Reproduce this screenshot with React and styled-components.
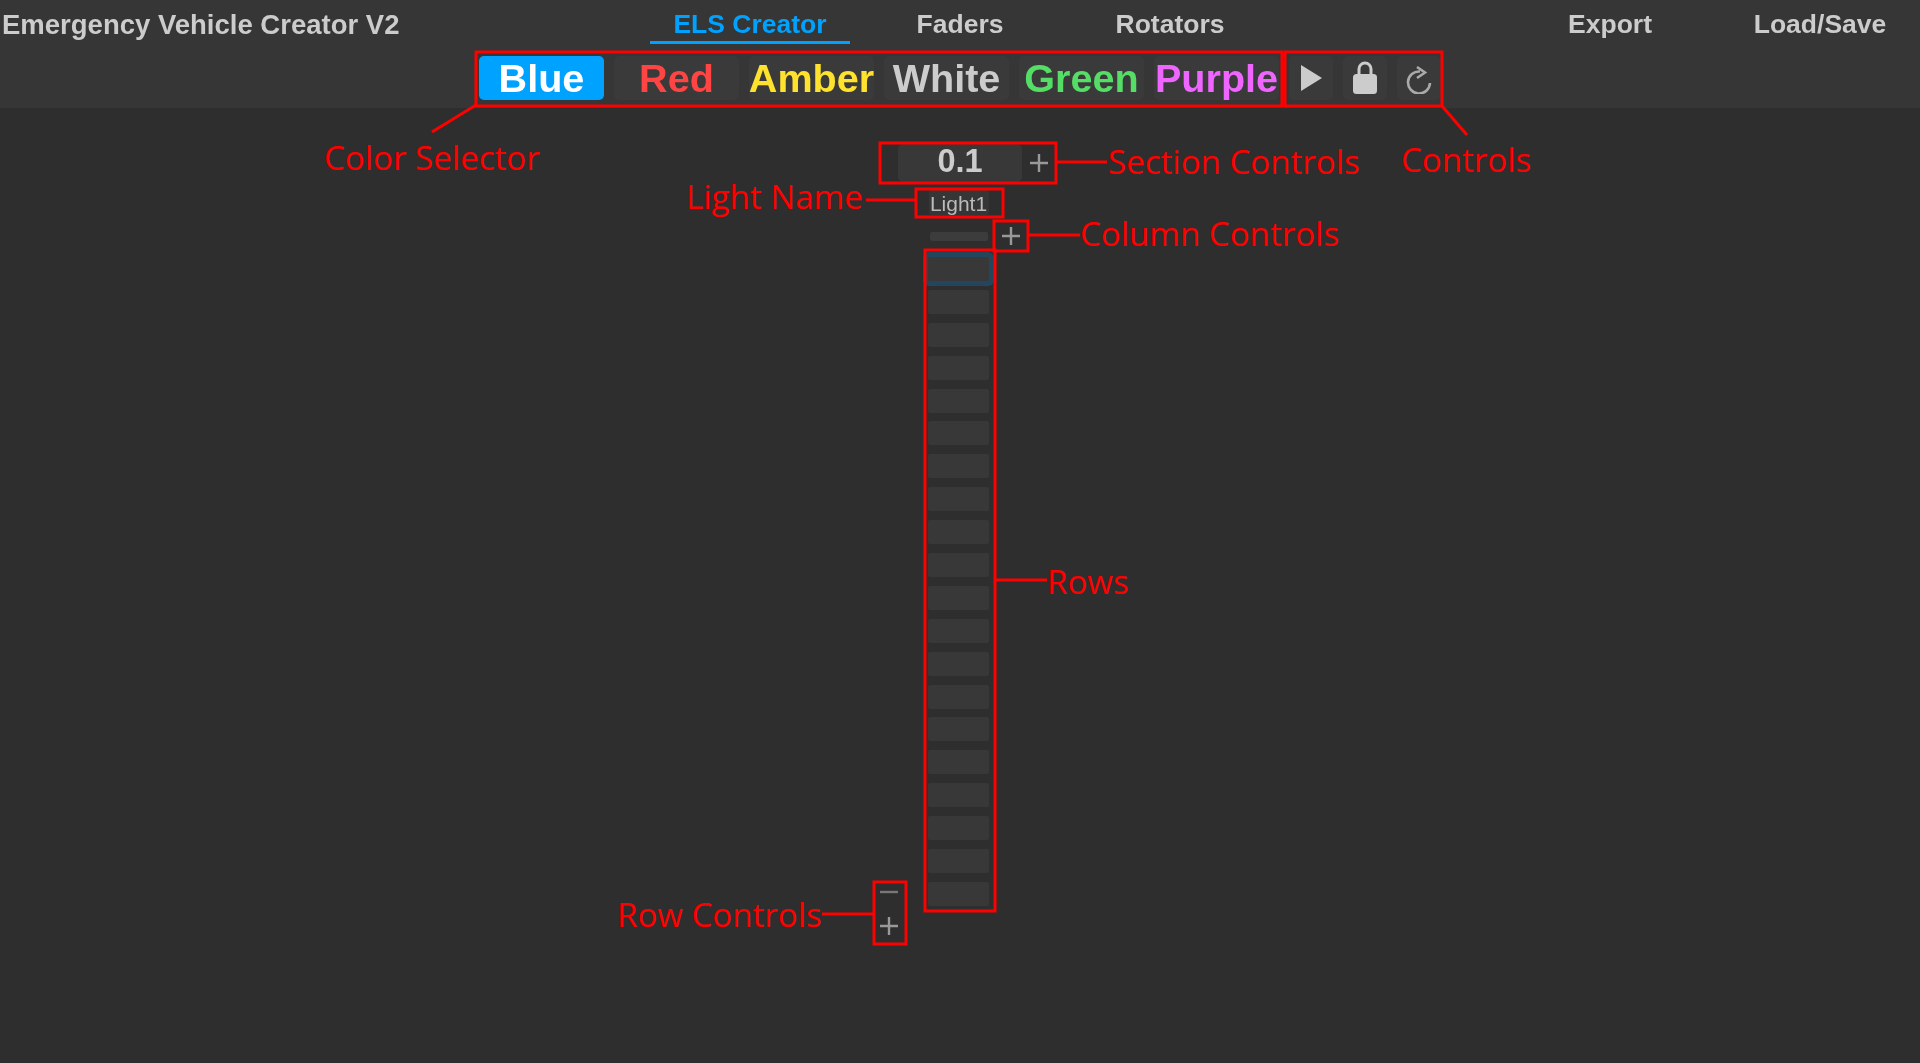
import React from "react";
import styled, { createGlobalStyle } from "styled-components";

const GlobalStyle = createGlobalStyle`
    html, body {
        margin: 0;
        height: 100%;
        background: #2e2e2e;
        overflow: hidden;
    }
    #root {
        height: 100%;
    }
`;

const COLORS = [
    { name: "Blue", color: "#ffffff", active: true },
    { name: "Red", color: "#ff4444" },
    { name: "Amber", color: "#ffe22e" },
    { name: "White", color: "#cccccc" },
    { name: "Green", color: "#55dd66" },
    { name: "Purple", color: "#ee66ff" }
];

const ROWS = Array.from({ length: 20 }, (_, i) => i);

const BOXES = [
    [476, 52, 806, 54],
    [1285, 52, 157, 54],
    [880, 143, 176, 40],
    [916, 189, 87, 28],
    [994, 221, 34, 30],
    [925, 250, 70, 661],
    [874, 882, 32, 62]
];

const LINES = [
    [476, 105, 432, 132],
    [1442, 106, 1467, 135],
    [1056, 162, 1107, 162],
    [866, 200, 916, 200],
    [1028, 235, 1080, 235],
    [995, 580, 1047, 580],
    [822, 914, 874, 914]
];

const LABELS = [
    { text: "Color Selector", x: 324, y: 135 },
    { text: "Section Controls", x: 1108, y: 139 },
    { text: "Controls", x: 1401, y: 137 },
    { text: "Light Name", x: 686, y: 174 },
    { text: "Column Controls", x: 1080, y: 211 },
    { text: "Rows", x: 1047, y: 559 },
    { text: "Row Controls", x: 617, y: 892 }
];

export default function App() {
    return (
        <Page>
            <GlobalStyle />
            <Header>
                <TopRow>
                    <Title>Emergency Vehicle Creator V2</Title>
                    <Tabs>
                        <Tab $active>ELS Creator</Tab>
                        <Tab>Faders</Tab>
                        <Tab>Rotators</Tab>
                    </Tabs>
                    <RightTabs>
                        <Tab>Export</Tab>
                        <Tab>Load/Save</Tab>
                    </RightTabs>
                </TopRow>
                <Toolbar>
                    {COLORS.map(c => (
                        <ColorButton key={c.name} $color={c.color} $active={c.active}>
                            {c.name}
                        </ColorButton>
                    ))}
                    <IconButton>
                        <svg width="26" height="30" viewBox="0 0 26 30">
                            <path d="M3 2 L24 15 L3 28 Z" fill="#cccccc" />
                        </svg>
                    </IconButton>
                    <IconButton>
                        <svg width="26" height="36" viewBox="0 0 26 36">
                            <path
                                d="M7 16 V9 a6 6 0 0 1 12 0 V16"
                                fill="none"
                                stroke="#cccccc"
                                strokeWidth="3"
                            />
                            <rect x="1" y="14" width="24" height="20" rx="3.5" fill="#cccccc" />
                        </svg>
                    </IconButton>
                    <IconButton>
                        <svg width="28" height="32" viewBox="0 0 28 32">
                            <path
                                d="M15 9.5 A11 11 0 1 0 25 21"
                                fill="none"
                                stroke="#aaaaaa"
                                strokeWidth="2.6"
                            />
                            <path
                                d="M12 5 L20 10.5 L12 16"
                                fill="none"
                                stroke="#aaaaaa"
                                strokeWidth="2.6"
                            />
                        </svg>
                    </IconButton>
                </Toolbar>
            </Header>
            <Main>
                <SectionRow>
                    <TimeBox>0.1</TimeBox>
                    <PlainButton $size={34}>
                        <Plus />
                    </PlainButton>
                </SectionRow>
                <Track>
                    <TrackCenter>
                        <LightName>Light1</LightName>
                    </TrackCenter>
                </Track>
                <ColumnRow>
                    <ColumnBar />
                    <ColumnButton>
                        <Plus />
                    </ColumnButton>
                </ColumnRow>
                <Track>
                    <RowControls>
                        <PlainButton $size={24}>
                            <Minus />
                        </PlainButton>
                        <PlainButton $size={24}>
                            <Plus />
                        </PlainButton>
                    </RowControls>
                    <Cells>
                        {ROWS.map(r => (
                            <Cell key={r} $selected={r === 0} />
                        ))}
                    </Cells>
                </Track>
            </Main>
            <Marks viewBox="0 0 1920 1063">
                {BOXES.map(([x, y, w, h]) => (
                    <rect key={`${x}-${y}`} x={x} y={y} width={w} height={h} />
                ))}
                {LINES.map(([x1, y1, x2, y2]) => (
                    <line key={`${x1}-${y1}`} x1={x1} y1={y1} x2={x2} y2={y2} />
                ))}
            </Marks>
            {LABELS.map(l => (
                <Label key={l.text} $x={l.x} $y={l.y}>
                    {l.text}
                </Label>
            ))}
        </Page>
    );
}

const Plus = () => (
    <svg width="18" height="18" viewBox="0 0 18 18">
        <path d="M9 0 V18 M0 9 H18" stroke="#999999" strokeWidth="2.4" />
    </svg>
);

const Minus = () => (
    <svg width="18" height="18" viewBox="0 0 18 18">
        <path d="M0 9 H18" stroke="#777777" strokeWidth="2.4" />
    </svg>
);

const Page = styled.div`
    position: relative;
    height: 1063px;
    background: #2e2e2e;
    font-family: "Liberation Sans", Arial, sans-serif;
    color: #cccccc;
    overflow: hidden;
`;

const Header = styled.header`
    height: 108px;
    background: #363636;
    filter: blur(0.5px);
`;

const TopRow = styled.div`
    display: grid;
    grid-template-columns: 1fr auto 1fr;
    height: 48px;
`;

const Title = styled.div`
    padding: 9px 0 0 2px;
    font-size: 27.5px;
    font-weight: 700;
    line-height: 32px;
    white-space: nowrap;
`;

const Tabs = styled.nav`
    display: flex;
    gap: 10px;
    padding-top: 8px;
`;

const RightTabs = styled(Tabs)`
    justify-content: flex-end;
`;

const Tab = styled.div`
    width: 200px;
    height: 33px;
    text-align: center;
    font-size: 26.5px;
    font-weight: 700;
    line-height: 32px;
    color: ${props => (props.$active ? "#00a2ff" : "#cccccc")};
    border-bottom: 3px solid ${props => (props.$active ? "#00a2ff" : "transparent")};
    box-sizing: content-box;
`;

const Toolbar = styled.div`
    display: flex;
    justify-content: center;
    gap: 10px;
    margin-top: 8px;
`;

const ColorButton = styled.button`
    width: 125px;
    height: 44px;
    padding: 0;
    border: 0;
    border-radius: 5px;
    background: ${props => (props.$active ? "#00a2ff" : "#3a3a3a")};
    color: ${props => props.$color};
    font-family: inherit;
    font-size: 39.6px;
    font-weight: 700;
    line-height: 45px;
    white-space: nowrap;
    display: flex;
    justify-content: center;
`;

const IconButton = styled.button`
    width: 44px;
    height: 44px;
    padding: 0;
    border: 0;
    border-radius: 5px;
    background: #3a3a3a;
    display: flex;
    align-items: center;
    justify-content: center;
`;

const Main = styled.main`
    padding: 36px 3px 0 0;
    filter: blur(0.5px);
`;

const SectionRow = styled.div`
    display: grid;
    grid-template-columns: 1fr 124px 1fr;
    justify-items: start;
    align-items: center;
    margin-left: 3px;
`;

const TimeBox = styled.div`
    grid-column: 2;
    width: 124px;
    height: 38px;
    border-radius: 5px;
    background: #383838;
    text-align: center;
    font-size: 32.5px;
    font-weight: 700;
    line-height: 35px;
`;

const PlainButton = styled.div`
    width: ${props => props.$size}px;
    height: ${props => props.$size}px;
    display: flex;
    align-items: center;
    justify-content: center;
`;

const Track = styled.div`
    display: grid;
    grid-template-columns: 1fr 61px 1fr;
`;

const TrackCenter = styled.div`
    grid-column: 2;
    display: flex;
    justify-content: center;
    margin-top: 8px;
`;

const LightName = styled.div`
    width: 60px;
    height: 25px;
    background: #363636;
    border-radius: 3px;
    text-align: center;
    font-size: 21px;
    line-height: 27px;
    color: #bbbbbb;
    white-space: nowrap;
    display: flex;
    justify-content: center;
`;

const ColumnRow = styled(Track)`
    align-items: center;
    height: 42px;

    > :first-child {
        grid-column: 2;
        justify-self: center;
    }
`;

const ColumnBar = styled.div`
    width: 58px;
    height: 9px;
    background: #3c3c3c;
    border-radius: 2px;
`;

const ColumnButton = styled.div`
    display: flex;
    margin-left: 13px;
`;

const RowControls = styled.div`
    grid-column: 1;
    display: flex;
    flex-direction: column;
    align-items: flex-end;
    justify-content: flex-end;
    gap: 10px;
    padding-right: 27px;
    margin-bottom: -32px;
`;

const Cells = styled.div`
    grid-column: 2;
    display: flex;
    flex-direction: column;
    gap: 8.9px;
`;

const Cell = styled.div`
    height: 24px;
    background: #383838;
    border-radius: 2px;
    box-shadow: ${props => (props.$selected ? "0 0 0 5px #24465c" : "none")};
`;

const Marks = styled.svg`
    position: absolute;
    inset: 0;
    width: 1920px;
    height: 1063px;
    pointer-events: none;

    rect,
    line {
        fill: none;
        stroke: #ff0000;
        stroke-width: 3;
    }
`;

const Label = styled.div`
    position: absolute;
    left: ${props => props.$x}px;
    top: ${props => props.$y}px;
    font-family: "Open Sans", "Noto Sans", sans-serif;
    font-size: 33.1px;
    line-height: 46px;
    color: #ff0000;
    white-space: nowrap;
`;
